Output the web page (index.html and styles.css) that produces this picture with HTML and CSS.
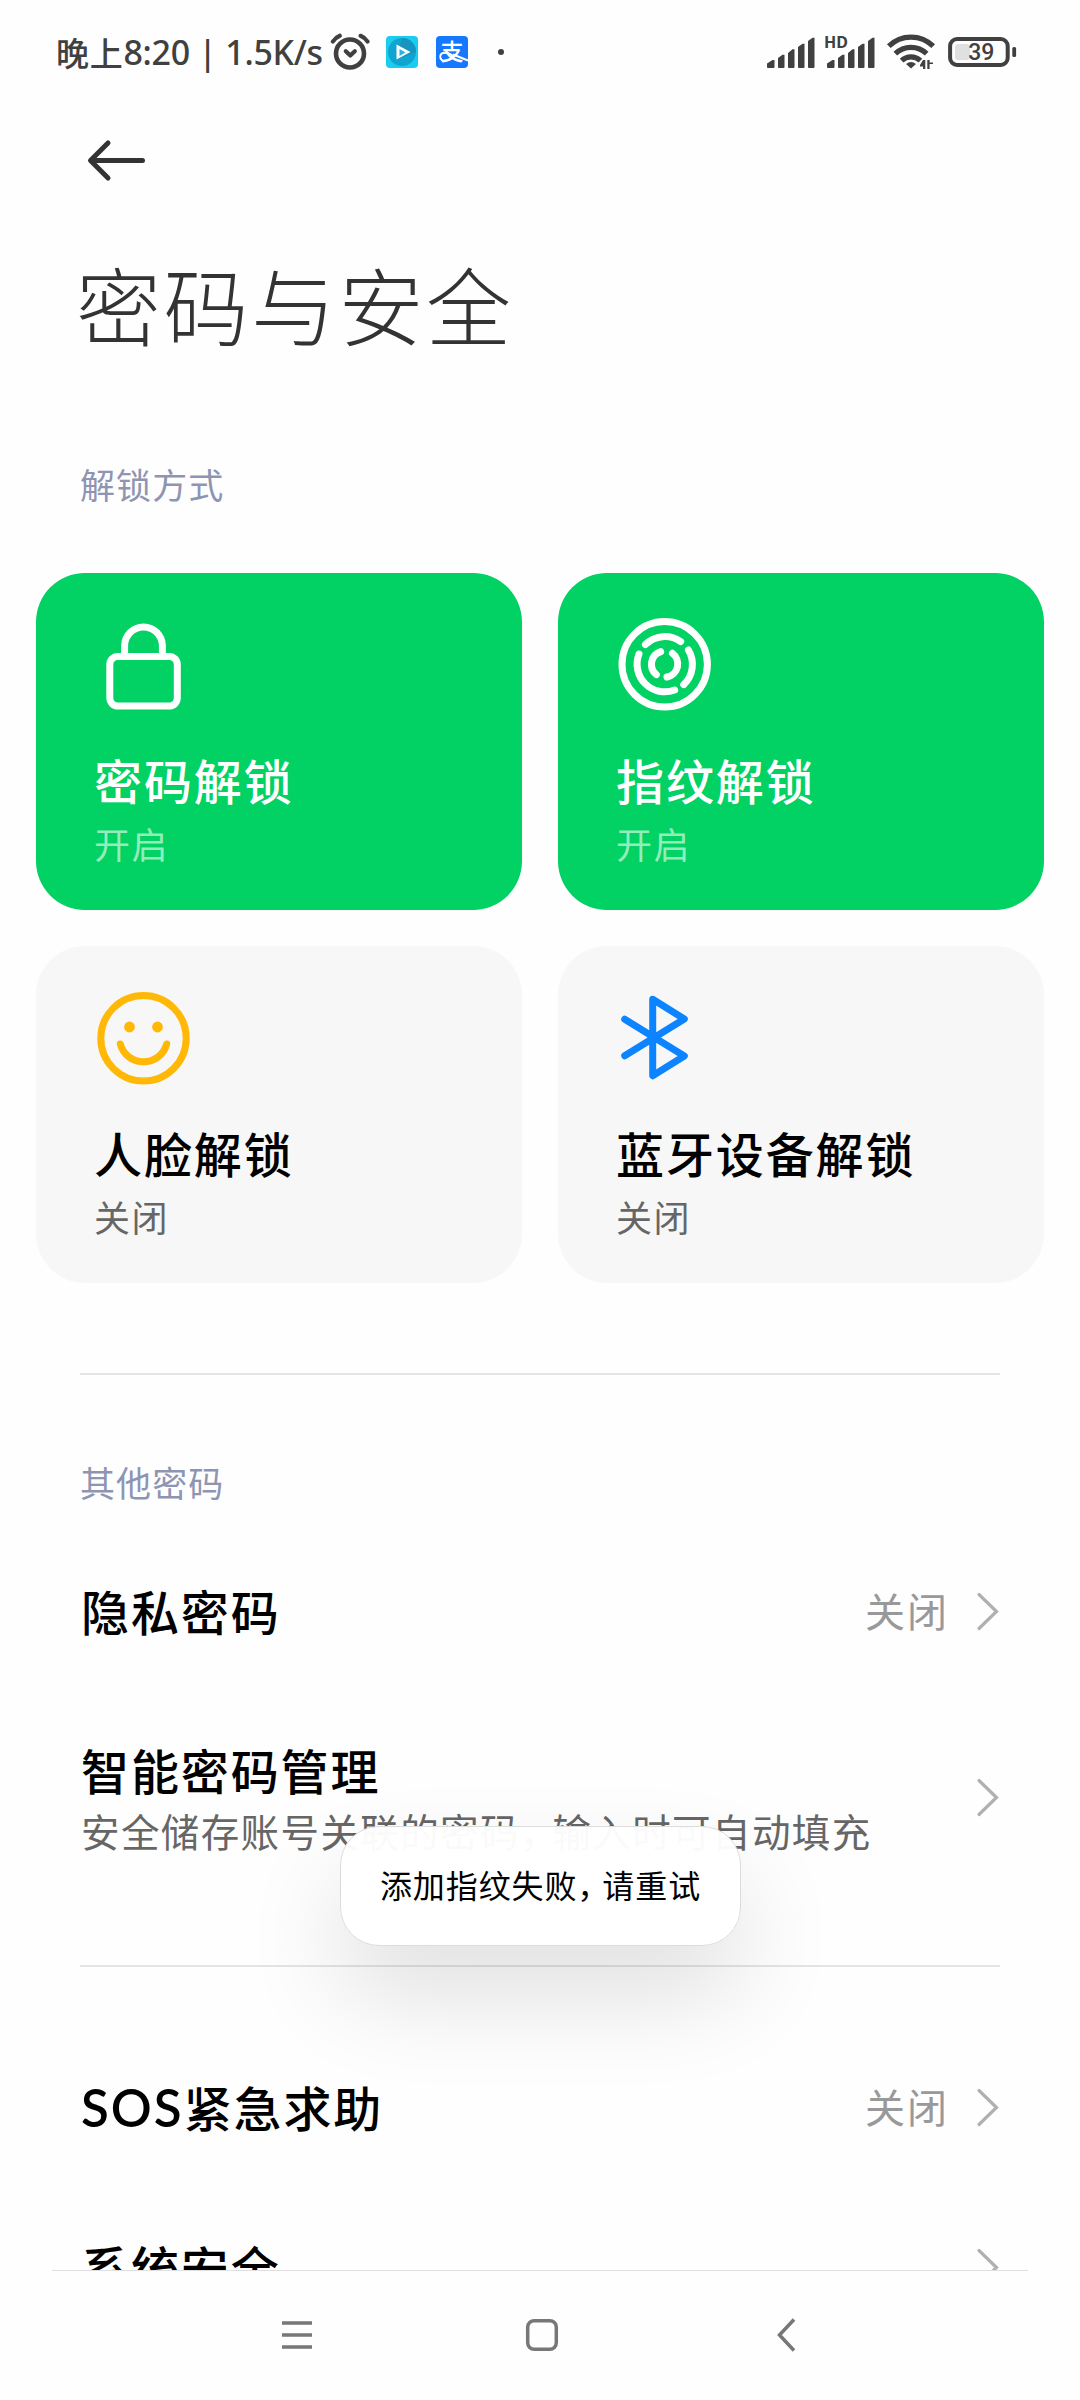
FILE: index.html
```html
<!DOCTYPE html>
<html lang="zh-CN">
<head>
<meta charset="utf-8">
<title>密码与安全</title>
<link rel="stylesheet" href="styles.css">
</head>
<body>
<div class="screen">
  <header class="status">
    <div class="status-left">
      <span class="clock"><span class="clock-cjk">晚上</span><span class="clock-num">8:20 | 1.5K/s</span></span>
      <svg class="alarm" width="40" height="38" viewBox="0 0 40 38" fill="none" stroke="#404040" stroke-linecap="round">
        <circle cx="20" cy="20.5" r="14" stroke-width="4.6"/>
        <path d="M2.8 8.6Q5.5 4.600 9.800 2.800M37.600 8.600Q35 4.600 30.600 2.800" stroke-width="4.200"/>
        <path d="M15.800 18.200L20.300 22.500L24.800 18.200" stroke-width="4.200" stroke-linejoin="round"/>
      </svg>
      <svg class="app" width="32" height="32" viewBox="0 0 32 32">
        <rect width="32" height="32" rx="4" fill="#19cdf0"/>
        <circle cx="16" cy="16" r="14" fill="#10a5d0"/>
        <path d="M16 2a14 14 0 0 1 14 14L10 24z" fill="#1794c0"/>
        <path d="M10.500 8.500V23.500L24.500 16z" fill="#fff"/>
        <path d="M13.500 13V20L19.500 16.500z" fill="#25b4dc"/>
      </svg>
      <svg class="app" width="32" height="32" viewBox="0 0 32 32">
        <rect width="32" height="32" rx="4" fill="#1677ff"/>
        <text x="16" y="24" class="pay">支</text>
        <path d="M17 20C12 15.500 4.500 15.500 4.200 20.500C4 26 13 26.500 18 19.500M17 18.500L32 24.500" fill="none" stroke="#fff" stroke-width="1.900"/>
      </svg>
      <i class="dot"></i>
    </div>
    <div class="status-right">
      <svg class="signal" width="48" height="32" viewBox="0 0 48 32" fill="#404040">
        <path d="M0 31V27.500L5.500 24H7.500V31Q7.500 32 6.500 32H1Q0 32 0 31zM11 31V22L15.500 18.700H17.500V31Q17.500 32 16.500 32H12Q11 32 11 31zM21 31V17L25.500 13.300H27.500V31Q27.500 32 26.500 32H22Q21 32 21 31zM31 31V11L35.500 7.700H37.500V31Q37.500 32 36.500 32H32Q31 32 31 31zM41 31V5L45.500 1.700H47.500V31Q47.500 32 46.500 32H42Q41 32 41 31z"/>
      </svg>
      <svg class="signal-hd" width="50" height="32" viewBox="0 0 50 32" fill="#404040">
        <text x="-1" y="11.800" class="hd">HD</text>
        <path d="M2 31V27.500L7.500 24H9.500V31Q9.500 32 8.500 32H3Q2 32 2 31zM13 31V22L17.500 18.700H19.500V31Q19.500 32 18.500 32H14Q13 32 13 31zM23 31V17L27.500 13.300H29.500V31Q29.500 32 28.500 32H24Q23 32 23 31zM33 31V11L37.500 7.700H39.500V31Q39.500 32 38.500 32H34Q33 32 33 31zM43 31V5L47.500 1.700H49.500V31Q49.500 32 48.500 32H44Q43 32 43 31z"/>
      </svg>
      <svg class="wifi" width="48" height="36" viewBox="0 0 48 36" fill="none" stroke="#404040">
        <path d="M1.800 12.200A31.600 31.600 0 0 1 46.200 12.200M8.300 19.700A22.500 22.500 0 0 1 39.700 19.700M14.600 26.700A13.500 13.500 0 0 1 33.400 26.700" stroke-width="5.200"/>
        <path d="M24 34.500L19 30Q24 26 29 30z" fill="#404040" stroke="none"/>
        <path d="M36 26H38.300V35H36V32.500H33V31zM40.300 35V26H42.600V28.500H46V30H42.600V35z" fill="#404040" stroke="none"/>
      </svg>
      <svg class="battery" width="70" height="32" viewBox="0 0 70 32">
        <rect x="2.100" y="3" width="57.600" height="26" rx="7" fill="none" stroke="#404040" stroke-width="4"/>
        <rect x="7" y="8" width="15" height="16" rx="3" fill="#e0e0e0"/>
        <rect x="64.300" y="11" width="3.800" height="10" rx="1.500" fill="#404040"/>
        <text x="33.300" y="24.400" class="level">39</text>
      </svg>
    </div>
  </header>

  <div class="toolbar">
    <svg width="64" height="44" viewBox="0 0 64 44" fill="none" stroke="#333" stroke-width="5" stroke-linecap="round" stroke-linejoin="round">
      <path d="M58.500 22.500H7M24 5L6.500 22.500L24 40"/>
    </svg>
  </div>
  <h1 class="title">密码与安全</h1>

  <main class="content">
    <h2 class="label">解锁方式</h2>
    <section class="grid">
      <div class="card on">
        <svg width="106" height="106" viewBox="0 0 106 106" fill="none" stroke="#fff" stroke-width="7">
          <rect x="19.800" y="47.500" width="67.500" height="49.500" rx="8"/>
          <path d="M34.600 47V37a18.900 19 0 0 1 37.800 0v10"/>
        </svg>
        <p class="name">密码解锁</p>
        <p class="state">开启</p>
      </div>
      <div class="card on">
        <svg width="106" height="106" viewBox="0 0 106 106" fill="none" stroke="#fff" stroke-width="7" stroke-linecap="round">
          <g transform="translate(52.700 55.300)">
            <circle r="42.700"/>
            <path d="M-19.300-19.700A27.700 27.700 0 0 1 16-22.700M23.700-14.300A27.700 27.700 0 0 1 19 20.300M10 25.700A27.700 27.700 0 0 1-25.700-10.300"/>
            <path d="M7.700-11A13.300 13.300 0 0 1 2.300 12.700M-4-12.700A13.300 13.300 0 0 0-8.300 10.300"/>
          </g>
        </svg>
        <p class="name">指纹解锁</p>
        <p class="state">开启</p>
      </div>
      <div class="card">
        <svg width="106" height="106" viewBox="0 0 106 106" fill="none" stroke="#ffb805" stroke-width="7" stroke-linecap="round">
          <g transform="translate(53.500 56.300)">
            <circle r="42.700"/>
            <path d="M-23.200 5.700A24 24 0 0 0 23.200 5.700"/>
            <g fill="#ffb805" stroke="none"><circle cx="-14" cy="-11.300" r="5.400"/><circle cx="14" cy="-11.300" r="5.400"/></g>
          </g>
        </svg>
        <p class="name">人脸解锁</p>
        <p class="state">关闭</p>
      </div>
      <div class="card">
        <svg width="106" height="106" viewBox="0 0 106 106" fill="none" stroke="#0d84ff" stroke-width="7" stroke-linecap="round" stroke-linejoin="round">
          <path d="M12.700 37.300L72.300 74L40.700 93.700V17.300L72.300 37L12.700 73.700"/>
        </svg>
        <p class="name">蓝牙设备解锁</p>
        <p class="state">关闭</p>
      </div>
    </section>

    <hr class="rule">
    <h2 class="label second">其他密码</h2>
    <div class="row">
      <p class="name">隐私密码</p>
      <span class="value">关闭</span>
      <svg class="chevron" width="24" height="42" viewBox="0 0 24 42"><path d="M3 3.500L20.500 20.500L3 37.500"/></svg>
    </div>
    <div class="row tall">
      <div class="texts">
        <p class="name">智能密码管理</p>
        <p class="summary">安全储存账号关联的密码<span class="comma">，</span>输入时可自动填充</p>
      </div>
      <svg class="chevron" width="24" height="42" viewBox="0 0 24 42"><path d="M3 3.500L20.500 20.500L3 37.500"/></svg>
    </div>
    <hr class="rule lower">
    <div class="row">
      <p class="name"><span class="latin">SOS</span>紧急求助</p>
      <span class="value">关闭</span>
      <svg class="chevron" width="24" height="42" viewBox="0 0 24 42"><path d="M3 3.500L20.500 20.500L3 37.500"/></svg>
    </div>
    <div class="row">
      <p class="name">系统安全</p>
      <svg class="chevron" width="24" height="42" viewBox="0 0 24 42"><path d="M3 3.500L20.500 20.500L3 37.500"/></svg>
    </div>
  </main>

  <nav class="nav">
    <svg width="34" height="34" viewBox="0 0 34 34"><path d="M2 5H32M2 17H32M2 29H32"/></svg>
    <svg width="36" height="36" viewBox="0 0 36 36"><rect x="3.700" y="3.700" width="28.600" height="28.600" rx="6.500"/></svg>
    <svg width="34" height="36" viewBox="0 0 34 36"><path d="M25 2.500L10.500 18L25 33.500"/></svg>
  </nav>

  <div class="toast">添加指纹失败<span class="comma">，</span>请重试</div>
</div>
</body>
</html>
```
FILE: styles.css
```css
* { box-sizing: border-box; }
body { margin: 0; background: #fefefe; }
h1, h2, p { margin: 0; font-weight: 400; }
svg { display: block; flex: none; overflow: visible; }

.screen {
  position: relative;
  display: flex;
  flex-direction: column;
  width: 1080px;
  height: 2400px;
  overflow: hidden;
  background: #fefefe;
  color: #000;
  font-family: "Noto Sans CJK SC", sans-serif;
}

/* status bar */
.status {
  display: flex;
  justify-content: space-between;
  height: 104px;
  padding: 0 62px 0 56px;
  color: #404040;
}
.status-left, .status-right { display: flex; align-items: center; }
.clock { display: flex; align-items: center; width: 274px; line-height: 50px; white-space: pre; }
.clock-cjk { font-size: 33px; font-weight: 500; letter-spacing: .7px; }
.clock-num { font-family: "Noto Sans", sans-serif; font-size: 34px; font-weight: 500; letter-spacing: -.3px; }
.alarm { margin-right: 16px; }
.app { margin-right: 18px; }
.pay { font: 500 23px "Noto Sans CJK SC", sans-serif; fill: #fff; text-anchor: middle; }
.dot { width: 6px; height: 6px; margin-left: 12px; border-radius: 50%; background: #404040; }
.signal { margin-right: 10px; }
.signal-hd { margin-right: 12px; }
.wifi { margin-right: 13px; }
.hd { font: 700 16px "Noto Sans", sans-serif; }
.level { font: 500 23px Roboto, sans-serif; fill: #404040; text-anchor: middle; }

/* heading */
.toolbar { display: flex; align-items: center; height: 112px; padding: 0 84px; }
.title {
  height: 174px;
  padding-left: 76px;
  font-size: 85px;
  font-weight: 300;
  line-height: 174px;
  letter-spacing: 2.500px;
  color: #333;
}

.content { height: 1880px; overflow: hidden; }
.label {
  height: 183px;
  padding: 67px 0 0 80px;
  font-size: 35px;
  line-height: 54px;
  letter-spacing: 1.100px;
  color: #8e95b2;
}

/* unlock cards */
.grid { display: grid; grid-template-columns: 486px 486px; gap: 36px; padding-left: 36px; }
.card { height: 337px; padding: 36px 0 0 54px; border-radius: 49px; background: #f7f7f7; }
.name { font-size: 48px; font-weight: 500; line-height: 70px; letter-spacing: 1.900px; white-space: nowrap; }
.card .name { margin-top: 29px; padding-left: 4px; }
.state { margin-top: 2px; padding-left: 4px; font-size: 36px; line-height: 54px; letter-spacing: 1.500px; color: #666; }
.card.on { background: #02d163; color: #fff; }
.card.on .state { color: #93edbb; }

.rule { height: 2px; margin: 90px 80px 0; border: 0; background: #e4e4e4; }
.label.second { height: 157px; padding-top: 80px; }

/* settings rows */
.row { display: flex; align-items: center; height: 160px; padding: 0 80px 0 81px; }
.row .name { flex: 1; margin-top: -5px; }
.value { margin-top: -5px; font-size: 40px; line-height: 60px; letter-spacing: 2px; color: #999; }
.chevron { margin-left: 27px; fill: none; stroke: #b0b0b0; stroke-width: 3.200; stroke-linecap: round; }
.tall { height: 212px; }
.texts { flex: 1; }
.texts .name { margin-top: -6px; }
.summary { font-size: 38.500px; line-height: 52px; letter-spacing: 1.400px; color: #666; white-space: nowrap; }
.summary .comma { letter-spacing: -6px; }
.rule.lower { margin: 61px 80px; }
.latin { font-family: Lato, sans-serif; font-size: 51px; font-weight: 600; line-height: 1; letter-spacing: 2px; }

/* navigation bar */
.nav {
  display: flex;
  align-items: center;
  justify-content: space-between;
  flex: 1;
  margin: 0 52px;
  padding: 0 225px 2px 228px;
  border-top: 1px solid #e0e0e0;
}
.nav svg { fill: none; stroke: #777; stroke-width: 3.500; }

/* floating message */
.toast {
  position: absolute;
  top: 1826px;
  left: 340px;
  width: 401px;
  height: 120px;
  border: 1px solid #dcdcdc;
  border-radius: 39px;
  background: rgba(255, 255, 255, .97);
  box-shadow: 0 50px 100px rgba(0, 0, 0, .12);
  font-size: 32px;
  line-height: 115px;
  letter-spacing: .900px;
  text-align: center;
  white-space: nowrap;
}
.toast .comma { letter-spacing: -7px; }
```
